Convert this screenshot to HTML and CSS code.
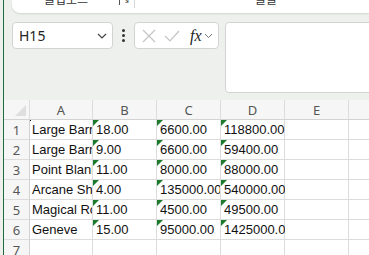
FILE: index.html
```html
<!DOCTYPE html>
<html lang="ko">
<head>
    <meta charset="UTF-8">
    <title>Sheet</title>
    <link rel="stylesheet" href="styles.css">
</head>
<body>
    <div class="app">
        <!-- リボン下端 -->
        <div class="ribbon">
            <div class="ribbon-row">
                <div class="group group-clip">
                    <span class="group-label">클립보드</span>
                    <span class="launcher">↘</span>
                </div>
                <div class="group group-font">
                    <span class="group-label">글꼴</span>
                </div>
            </div>
        </div>

        <!-- 数式バー -->
        <div class="formula-row">
            <div class="name-box">
                <span>H15</span>
                <svg class="chev" width="10" height="6" viewBox="0 0 10 6"><path d="M1 1l4 4 4-4" fill="none" stroke="#444" stroke-width="1.2"/></svg>
            </div>
            <div class="dots"><i></i><i></i><i></i></div>
            <div class="fx-box">
                <svg width="14" height="14" viewBox="0 0 14 14"><path d="M1 1l12 12M13 1L1 13" stroke="#c4c4c4" stroke-width="1.2"/></svg>
                <svg width="16" height="12" viewBox="0 0 16 12"><path d="M1 6l5 5 9-10" fill="none" stroke="#c4c4c4" stroke-width="1.2"/></svg>
                <span class="fx">fx</span>
                <svg class="chev-s" width="9" height="6" viewBox="0 0 9 6"><path d="M1 1l3.5 3.5L8 1" fill="none" stroke="#777" stroke-width="1"/></svg>
            </div>
            <div class="formula-input"></div>
        </div>

        <!-- シート -->
        <div class="sheet">
            <div class="hd corner"><span class="tri"></span></div>
            <div class="hd">A</div>
            <div class="hd">B</div>
            <div class="hd">C</div>
            <div class="hd">D</div>
            <div class="hd">E</div>
            <div class="hd"></div>

            <div class="rh">1</div>
            <div class="c clip sel">Large Barrier</div>
            <div class="c t">18.00</div>
            <div class="c t">6600.00</div>
            <div class="c t ov">118800.00</div>
            <div class="c"></div>
            <div class="c"></div>

            <div class="rh">2</div>
            <div class="c clip">Large Barrier</div>
            <div class="c t">9.00</div>
            <div class="c t">6600.00</div>
            <div class="c t ov">59400.00</div>
            <div class="c"></div>
            <div class="c"></div>

            <div class="rh">3</div>
            <div class="c clip">Point Blank</div>
            <div class="c t">11.00</div>
            <div class="c t">8000.00</div>
            <div class="c t ov">88000.00</div>
            <div class="c"></div>
            <div class="c"></div>

            <div class="rh">4</div>
            <div class="c clip">Arcane Shield</div>
            <div class="c t">4.00</div>
            <div class="c t">135000.00</div>
            <div class="c t ov">540000.00</div>
            <div class="c"></div>
            <div class="c"></div>

            <div class="rh">5</div>
            <div class="c clip">Magical Robe</div>
            <div class="c t">11.00</div>
            <div class="c t">4500.00</div>
            <div class="c t ov">49500.00</div>
            <div class="c"></div>
            <div class="c"></div>

            <div class="rh">6</div>
            <div class="c clip">Geneve</div>
            <div class="c t">15.00</div>
            <div class="c t">95000.00</div>
            <div class="c t ov">1425000.00</div>
            <div class="c"></div>
            <div class="c"></div>

            <div class="rh">7</div>
            <div class="c"></div>
            <div class="c"></div>
            <div class="c"></div>
            <div class="c"></div>
            <div class="c"></div>
            <div class="c"></div>
        </div>
    </div>
</body>
</html>
```

FILE: styles.css
```css
html, body {
    margin: 0;
    height: 100%;
    overflow: hidden;
    background: #eef0ee;
}
.app {
    margin-left: 3px;
    border-left: 1px solid #1f6b3c;
    height: 100%;
    font-family: 'Noto Sans', 'Noto Sans CJK KR', sans-serif;
}
.ribbon {
    margin-left: 8px;
    height: 13px;
    background: #fff;
    border-bottom-left-radius: 8px;
    box-shadow: 0 1px 2px rgba(0, 0, 0, 0.12);
    overflow: hidden;
}
.ribbon-row {
    display: flex;
    margin-top: -9px;
    font-size: 12px;
    line-height: 16px;
    color: #333;
}
.group {
    display: flex;
    align-items: center;
    flex-shrink: 0;
}
.group-clip {
    width: 122px;
    border-right: 1px solid #d6d6d6;
    height: 17px;
}
.group-clip .group-label {
    margin-left: 32px;
}
.launcher {
    margin-left: auto;
    margin-right: 3px;
    font-size: 9px;
    line-height: 10px;
    border: 1px solid #555;
    border-width: 1px 0 0 1px;
    padding: 0 1px;
}
.group-font {
    width: 262px;
    justify-content: center;
}
.formula-row {
    display: flex;
    align-items: flex-start;
    margin: 9px 0 0 8px;
}
.formula-row > * {
    flex-shrink: 0;
}
.name-box {
    box-sizing: border-box;
    width: 101px;
    height: 27px;
    background: #fff;
    border: 1px solid #d3d3d3;
    border-radius: 4px;
    display: flex;
    align-items: center;
    padding: 0 5px 0 6px;
    font-size: 14px;
    color: #222;
}
.chev {
    margin-left: auto;
}
.dots {
    width: 21px;
    height: 27px;
    display: flex;
    flex-direction: column;
    align-items: center;
    justify-content: center;
    gap: 2px;
}
.dots i {
    width: 3px;
    height: 3px;
    background: #333;
    border-radius: 50%;
}
.fx-box {
    box-sizing: border-box;
    width: 85px;
    height: 27px;
    background: #fff;
    border: 1px solid #d3d3d3;
    border-radius: 4px;
    display: flex;
    align-items: center;
    padding: 0 2px 0 7px;
    gap: 8px;
}
.fx {
    font-family: 'Liberation Serif', serif;
    font-style: italic;
    font-size: 16px;
    color: #222;
    margin-left: 2px;
}
.chev-s {
    margin-left: -6px;
}
.formula-input {
    box-sizing: border-box;
    margin-left: 6px;
    width: 200px;
    height: 71px;
    background: #fff;
    border: 1px solid #d3d3d3;
    border-radius: 4px;
}
.sheet {
    margin-top: 7px;
    display: grid;
    grid-template-columns: 26px 63px 64px 64px 64px 64px 64px;
    grid-auto-rows: 20px;
    font-family: 'Liberation Sans', sans-serif;
    font-size: 13px;
}
.hd, .rh, .c {
    box-sizing: border-box;
    border-right: 1px solid #dcdcdc;
    border-bottom: 1px solid #dcdcdc;
}
.hd {
    background: #f6f6f6;
    border-bottom-color: #d2d2d2;
    color: #555;
    font-family: 'Noto Sans', sans-serif;
    font-size: 13px;
    line-height: 20px;
    text-align: center;
}
.corner {
    position: relative;
}
.tri {
    position: absolute;
    right: 3px;
    bottom: 3px;
    border-left: 11px solid transparent;
    border-bottom: 11px solid #dedede;
}
.rh {
    background: #f6f6f6;
    border-right-color: #d2d2d2;
    color: #555;
    font-family: 'Noto Sans', sans-serif;
    text-align: center;
    line-height: 20px;
}
.c {
    background: #fff;
    color: #111;
    line-height: 20px;
    padding-left: 2px;
    white-space: nowrap;
    position: relative;
}
.clip {
    overflow: hidden;
}
.sel::before {
    content: '';
    position: absolute;
    left: -1px;
    top: -1px;
    width: 2px;
    height: 2px;
    background: #111;
}
.t {
    padding-left: 3px;
    overflow: hidden;
}
.t.ov {
    overflow: visible;
}
.t::before {
    content: '';
    position: absolute;
    left: 0;
    top: 0;
    border-top: 6px solid #1b7a2c;
    border-right: 6px solid transparent;
}
```
